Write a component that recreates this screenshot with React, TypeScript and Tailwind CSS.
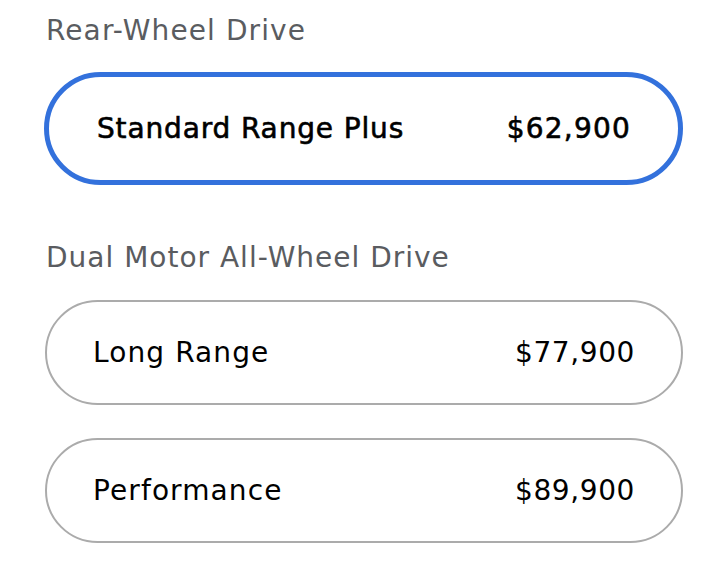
import React from "react";

type Trim = { name: string; price: string; selected?: boolean };

const rwd: Trim[] = [{ name: "Standard Range Plus", price: "$62,900", selected: true }];
const awd: Trim[] = [
  { name: "Long Range", price: "$77,900" },
  { name: "Performance", price: "$89,900" },
];

const TrimOption = ({ trim }: { trim: Trim }) => {
  if (trim.selected) {
    return (
      <div className="flex h-[113px] w-[639px] items-center justify-between rounded-full border-[5px] border-[#3371dc] pl-[48px] pr-[47px] text-[28px] text-black [-webkit-text-stroke:0.6px_black]">
        <span className="tracking-[0.85px]">{trim.name}</span>
        <span className="tracking-[1.2px]">{trim.price}</span>
      </div>
    );
  }
  return (
    <div className="ml-px flex h-[105px] w-[638px] items-center justify-between rounded-full border-2 border-[#ababab] px-[46px] text-[28px] text-black">
      <span className="tracking-[1.1px]">{trim.name}</span>
      <span className="tracking-[0.6px]">{trim.price}</span>
    </div>
  );
};

const App = () => {
  return (
    <div
      className="h-[572px] w-[728px] bg-white pl-[44px]"
      style={{ fontFamily: '"DejaVu Sans", "Liberation Sans", sans-serif' }}
    >
      <div className="pt-[12px] pl-[2px] text-[28px] leading-[37px] tracking-[1.1px] text-[#5a5c60]">Rear-Wheel Drive</div>
      <div className="mt-[23px] flex flex-col">
        {rwd.map((t) => (
          <TrimOption key={t.name} trim={t} />
        ))}
      </div>
      <div className="mt-[54px] pl-[2px] text-[28px] leading-[37px] tracking-[1px] text-[#5a5c60]">
        Dual Motor All-Wheel Drive
      </div>
      <div className="mt-[24px] flex flex-col gap-[33px]">
        {awd.map((t) => (
          <TrimOption key={t.name} trim={t} />
        ))}
      </div>
    </div>
  );
};

export default App;
